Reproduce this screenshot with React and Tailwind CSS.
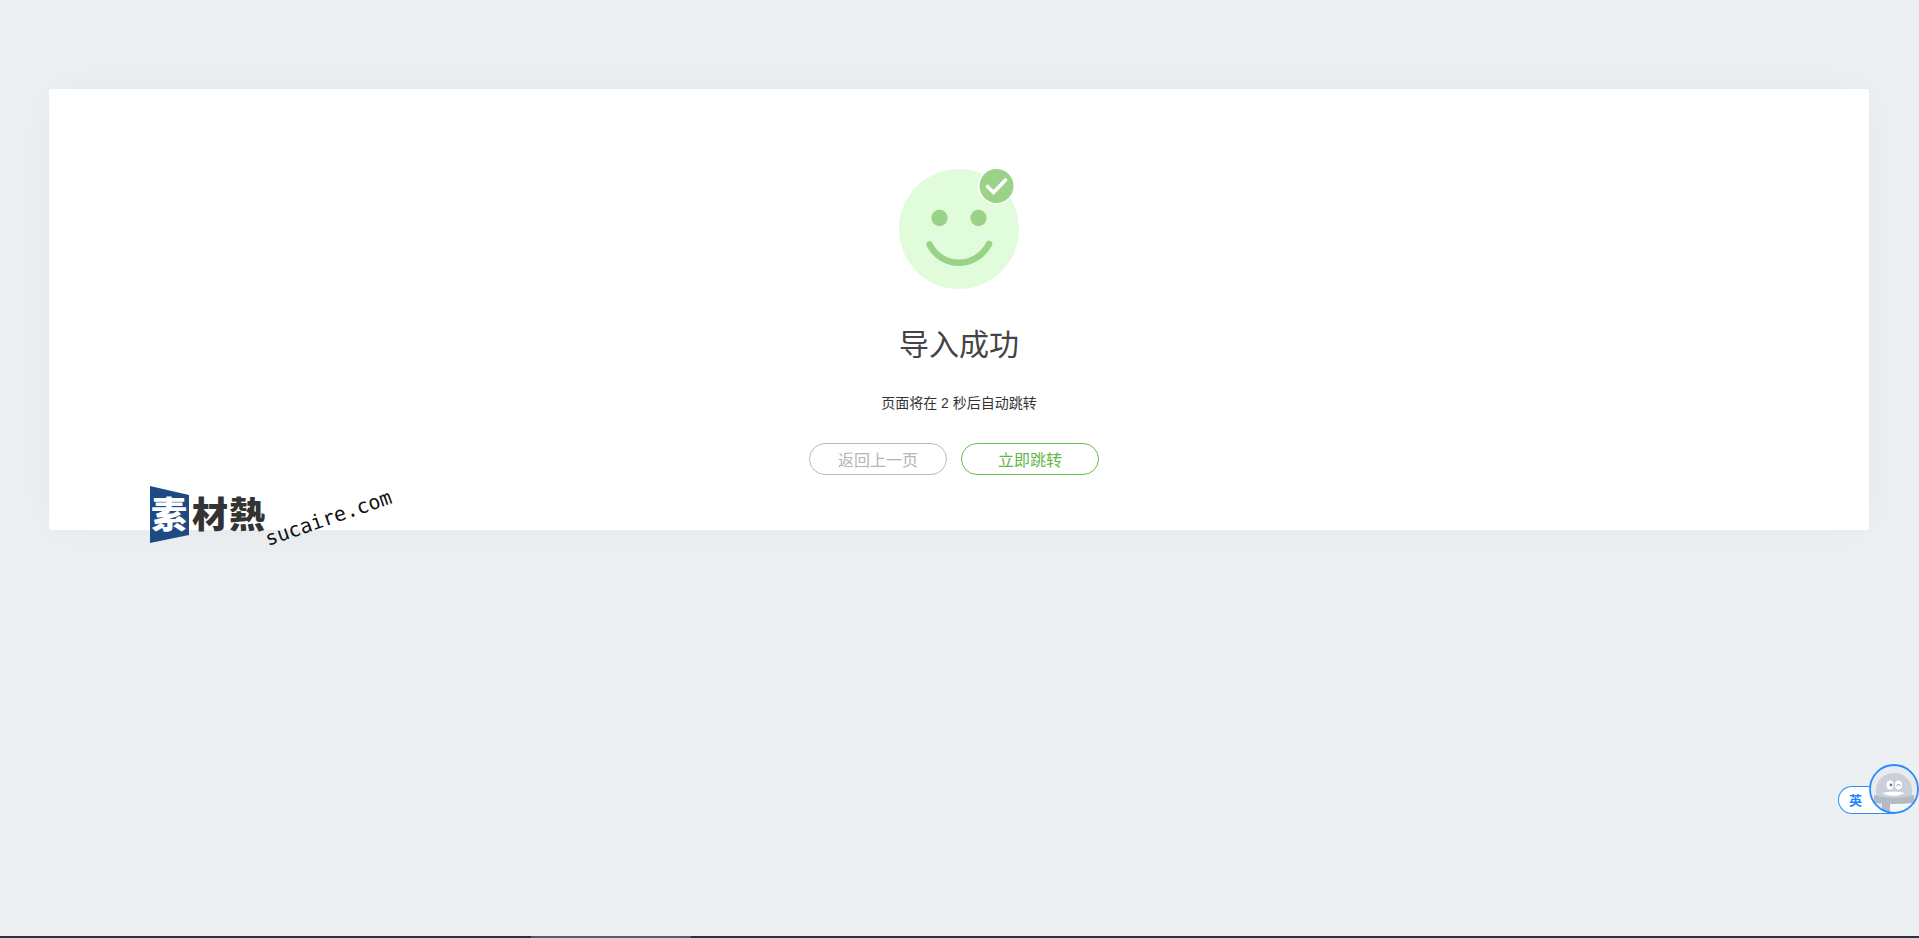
import clsx from "clsx";

// Buttons under the message
const actions = [
	{ name: "back", label: "返回上一页", style: "border-[#bbb] text-[#b5b5b5]" },
	{ name: "go", label: "立即跳转", style: "border-[#67bd4f] text-[#5fb848]" },
];

const SuccessIcon = () => (
	<svg className="size-[120px]" viewBox="0 0 120 120" fill="none" aria-hidden="true">
		<circle cx="60" cy="60" r="60" fill="#e1fcda" />
		<circle cx="40.500" cy="49" r="8.200" fill="#9ad388" />
		<circle cx="79.500" cy="49" r="8.200" fill="#9ad388" />
		<path d="M30.500 75.500C43 100 77 100 90 75" stroke="#9ad388" strokeWidth="6.500" strokeLinecap="round" />
		<circle cx="97" cy="17" r="18.500" fill="#fff" />
		<circle cx="97.500" cy="17" r="17" fill="#9ad388" />
		<path d="M88.500 17.500l6 6L106.500 11" stroke="#fff" strokeWidth="3.600" strokeLinecap="round" />
	</svg>
);

const Watermark = () => (
	<svg className="absolute left-[150px] top-[480px] h-[72px] w-[250px]" viewBox="0 0 250 72">
		<path d="M0 6L39 15V55L0 63Z" fill="#1d4a82" />
		<g className="font-['Noto_Sans_CJK_TC',sans-serif] text-[36px] font-black">
			<text x="1" y="48" fill="#fff">素</text>
			<text x="42" y="48" fill="#333">材</text>
			<text x="79" y="48" fill="#333">熱</text>
		</g>
		<text
			className="font-['DejaVu_Sans_Mono',monospace] text-[20px]"
			transform="translate(118 66) rotate(-19)"
			fill="#111"
		>
			sucaire.com
		</text>
	</svg>
);

const InputBadge = () => (
	<div className="absolute right-0 top-[764px] flex items-end">
		<div className="-mr-6 h-7 w-[55px] rounded-l-full border border-r-0 border-[#2b8cff] bg-white pl-2.5 font-['Noto_Sans_CJK_SC',sans-serif] text-[13px]/[26px] font-bold text-[#1f86ff]">
			英
		</div>
		<svg className="relative size-[50px]" viewBox="0 0 50 50" aria-hidden="true">
			<circle cx="25" cy="25" r="24" fill="#e8ebef" />
			<clipPath id="face">
				<circle cx="25" cy="25" r="24" />
			</clipPath>
			<g clipPath="url(#face)">
				<path d="M7 34V26a18 17 0 0 1 36 0V34Z" fill="#cbd0d8" />
				<path d="M15 38h28v12H15Z" fill="#f5f7f9" />
				<path d="M5 31Q25 37 45 31V39Q25 41 5 39Z" fill="#b3bac2" />
				<path d="M13 38h8v12h-8Z" fill="#b3bac4" />
				<ellipse cx="21" cy="21" rx="3.500" ry="4.500" fill="#fff" />
				<ellipse cx="29.500" cy="21" rx="3.500" ry="4.500" fill="#fff" />
				<circle cx="22" cy="21" r="1.400" fill="#6c7886" />
				<path d="M27.500 21.500q2-2 4 0" stroke="#8a939f" fill="none" />
				<path d="M13 29Q25 26 36 29Q25 35 13 29Z" fill="#fff" />
			</g>
			<circle cx="25" cy="25" r="24" fill="none" stroke="#2b8cff" strokeWidth="1.800" />
		</svg>
	</div>
);

export default function App() {
	return (
		<div className="relative flex min-h-screen flex-col bg-[#ecf0f3] font-['Noto_Sans_CJK_SC',sans-serif]">
			<main className="ml-[49px] mr-[50px] mt-[89px] flex flex-col items-center rounded-xs bg-white px-8 pb-[55px] pt-20 shadow-[0_0_50px_rgba(0,0,0,0.04)]">
				<SuccessIcon />
				<h1 className="mt-7 text-[30px]/[50px] text-[#444]">导入成功</h1>
				<p className="mt-[26px] font-['Liberation_Sans','Noto_Sans_CJK_SC',sans-serif] text-sm/[20px] text-[#333]">
					页面将在 2 秒后自动跳转
				</p>
				<div className="mt-[30px] flex gap-3.5 pr-2.5">
					{actions.map(({ name, label, style }) => (
						<button
							key={name}
							type="button"
							className={clsx("h-8 w-[138px] rounded-full border text-base/[28px]", style)}
						>
							{label}
						</button>
					))}
				</div>
			</main>
			<div className="mt-auto h-0.5 bg-[#20353f]">
				<div className="ml-[531px] h-full w-40 bg-[#4d5e66]" />
			</div>
			<Watermark />
			<InputBadge />
		</div>
	);
}
